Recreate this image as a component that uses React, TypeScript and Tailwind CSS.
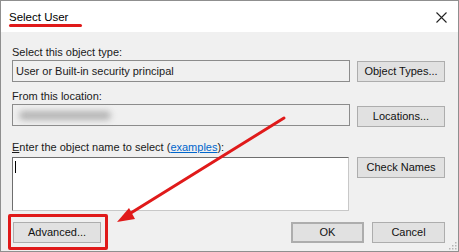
import React from "react";

const font = { fontFamily: '"Liberation Sans", Arial, sans-serif' };

function Btn({ label, className = "" }: { label: React.ReactNode; className?: string }) {
  return (
    <div
      className={`h-[21px] flex items-center justify-center bg-[#e1e1e1] border border-[#adadad] text-[11px] text-[#111] ${className}`}
    >
      {label}
    </div>
  );
}

export default function App() {
  return (
    <div className="w-[459px] h-[252px] bg-white" style={font}>
      <div className="relative w-[459px] h-[252px] bg-[#f0f0f0] border border-[#8f8f8f] flex flex-col">
        {/* title bar */}
        <div className="h-[31px] bg-white flex items-center justify-between pl-[8px] pr-[11px] shrink-0">
          <span className="text-[11.5px] text-black pt-[2px]">Select User</span>
          <svg width="11" height="11" viewBox="0 0 11 11" className="mt-[1px]">
            <path d="M0.5 0.5 L10.5 10.5 M10.5 0.5 L0.5 10.5" stroke="#222" strokeWidth="1.1" fill="none" />
          </svg>
        </div>

        <div className="flex flex-col pl-[11px] pr-[13px] text-[11px] text-[#1a1a1a]">
          <div className="mt-[12px] h-[16px] leading-[16px]">Select this object type:</div>
          <div className="flex gap-[7px]">
            <div className="w-[338px] h-[22px] border border-[#8c8c8c] bg-[#f0f0f0] flex items-center pl-[3px]">
              User or Built-in security principal
            </div>
            <Btn label="Object Types..." className="w-[88px] mt-[1px]" />
          </div>

          <div className="mt-[6px] h-[16px] leading-[16px]">From this location:</div>
          <div className="flex gap-[7px]">
            <div className="w-[338px] h-[22px] border border-[#8c8c8c] bg-[#f0f0f0] flex items-center pl-[6px]">
              <div className="w-[92px] h-[9px] rounded-full bg-[#b4b4b4] blur-[3px]" />
            </div>
            <Btn label="Locations..." className="w-[88px] mt-[2px]" />
          </div>

          <div className="mt-[12px] h-[16px] leading-[16px]">
            <span className="underline">E</span>nter the object name to select (
            <span className="text-[#0066cc] underline">examples</span>):
          </div>
          <div className="flex gap-[8px] mt-[2px]">
            <div className="w-[337px] h-[54px] bg-white border border-[#c8c8c8] border-t-[#6e6e6e] border-l-[#6e6e6e] pl-[2px] pt-[3px]">
              <div className="w-[1px] h-[12px] bg-black" />
            </div>
            <Btn label="Check Names" className="w-[88px]" />
          </div>

          <div className="flex mt-[11px]">
            <Btn label="Advanced..." className="w-[88px] ml-[1px]" />
            <div className="flex-1" />
            <Btn label="OK" className="w-[73px] border-2 border-[#0078d7]" />
            <Btn label="Cancel" className="w-[73px] ml-[8px]" />
          </div>
        </div>

        {/* resize grip */}
        <svg width="9" height="9" viewBox="0 0 9 9" className="absolute right-[1px] bottom-[1px]">
          {[
            [7, 1],
            [4, 4],
            [7, 4],
            [1, 7],
            [4, 7],
            [7, 7],
          ].map(([x, y]) => (
            <rect key={`${x}-${y}`} x={x} y={y} width="1.5" height="1.5" fill="#b5b5b5" />
          ))}
        </svg>

        {/* annotations */}
        <div className="absolute left-[8px] top-[23px] w-[73px] h-[3px] bg-[#e01a1a] rounded-full" />
        <div className="absolute left-[7px] top-[213px] w-[100px] h-[36px] border-[3px] border-[#e01a1a] rounded-[2px]" />
        <svg width="459" height="252" className="absolute left-[-1px] top-[-1px] pointer-events-none">
          <line x1="284" y1="118" x2="126" y2="216" stroke="#e01a1a" strokeWidth="3" strokeLinecap="round" />
          <polygon points="117,222 129,208 135,219" fill="#e01a1a" />
        </svg>
      </div>
    </div>
  );
}
